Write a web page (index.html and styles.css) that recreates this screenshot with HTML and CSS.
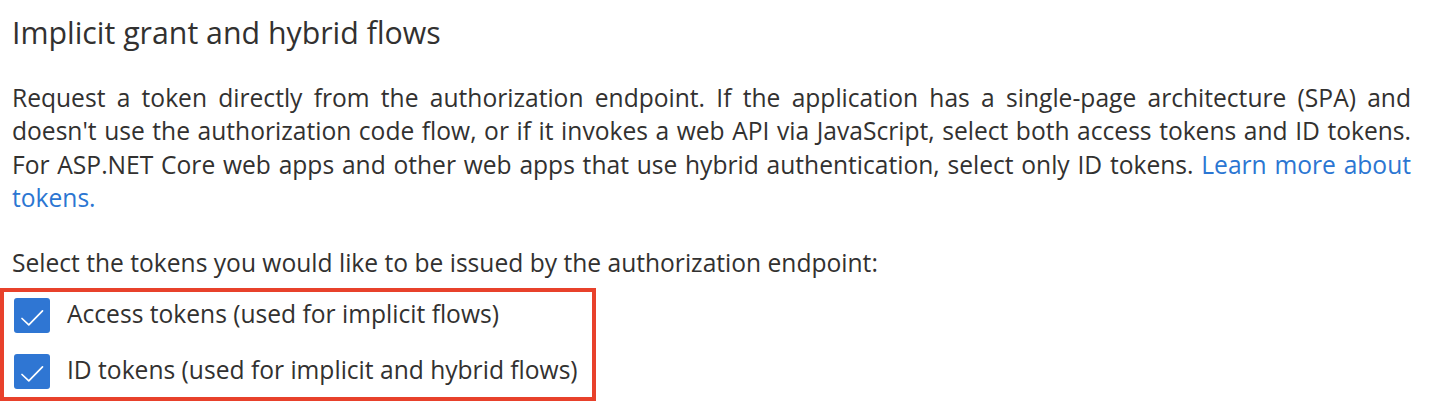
FILE: index.html
```html
<!DOCTYPE html>
<html lang="en">
<head>
<meta charset="utf-8">
<title>Implicit grant and hybrid flows</title>
<link rel="stylesheet" href="styles.css">
</head>
<body>
<section class="section">
  <h2 class="section-title">Implicit grant and hybrid flows</h2>
  <p class="description">Request a token directly from the authorization endpoint. If the application has a single-page architecture (SPA) and doesn't use the authorization code flow, or if it invokes a web API via JavaScript, select both access tokens and ID tokens. For ASP.NET Core web apps and other web apps that use hybrid authentication, select only ID tokens. <a class="link" href="#">Learn more about tokens.</a></p>
  <p class="prompt">Select the tokens you would like to be issued by the authorization endpoint:</p>
  <div class="options">
    <label class="option">
      <span class="checkbox" aria-hidden="true">
        <svg viewBox="0 0 36 36" width="36" height="36"><path d="M8 20.5 L14.8 26.8 L28.5 12.8" fill="none" stroke="#fff" stroke-width="1.7" stroke-linecap="round" stroke-linejoin="round"/></svg>
      </span>
      <span class="option-label">Access tokens (used for implicit flows)</span>
    </label>
    <label class="option">
      <span class="checkbox" aria-hidden="true">
        <svg viewBox="0 0 36 36" width="36" height="36"><path d="M8 20.5 L14.8 26.8 L28.5 12.8" fill="none" stroke="#fff" stroke-width="1.7" stroke-linecap="round" stroke-linejoin="round"/></svg>
      </span>
      <span class="option-label">ID tokens (used for implicit and hybrid flows)</span>
    </label>
  </div>
</section>
</body>
</html>
```
FILE: styles.css
```css
html, body {
  margin: 0;
  padding: 0;
  background: #ffffff;
}

body {
  font-family: "Open Sans", "Noto Sans", sans-serif;
  color: #323130;
}

.section {
  padding: 13.5px 23px 0 12px;
}

.section-title {
  margin: 0;
  font-size: 30.3px;
  font-weight: 400;
  line-height: 38px;
}

.description {
  margin: 29px 0 0;
  font-size: 24.6px;
  line-height: 33.5px;
  text-align: justify;
}

.link {
  color: #2b76d2;
  text-decoration: none;
}

.prompt {
  margin: 31.6px 0 0;
  font-size: 24.6px;
  line-height: 33.5px;
}

.options {
  display: flex;
  flex-direction: column;
  gap: 21px;
  width: fit-content;
  margin: 8.5px 0 0 -12px;
  padding: 6px 14px 8px 10px;
  border: 4px solid #e8412b;
}

.option {
  display: flex;
  align-items: flex-start;
  gap: 17px;
  font-size: 24.6px;
  line-height: 31.6px;
}

.checkbox {
  display: flex;
  flex: none;
  width: 36px;
  height: 35px;
  border-radius: 3px;
  background: #2f76d3;
}

.checkbox svg {
  display: block;
}
```
